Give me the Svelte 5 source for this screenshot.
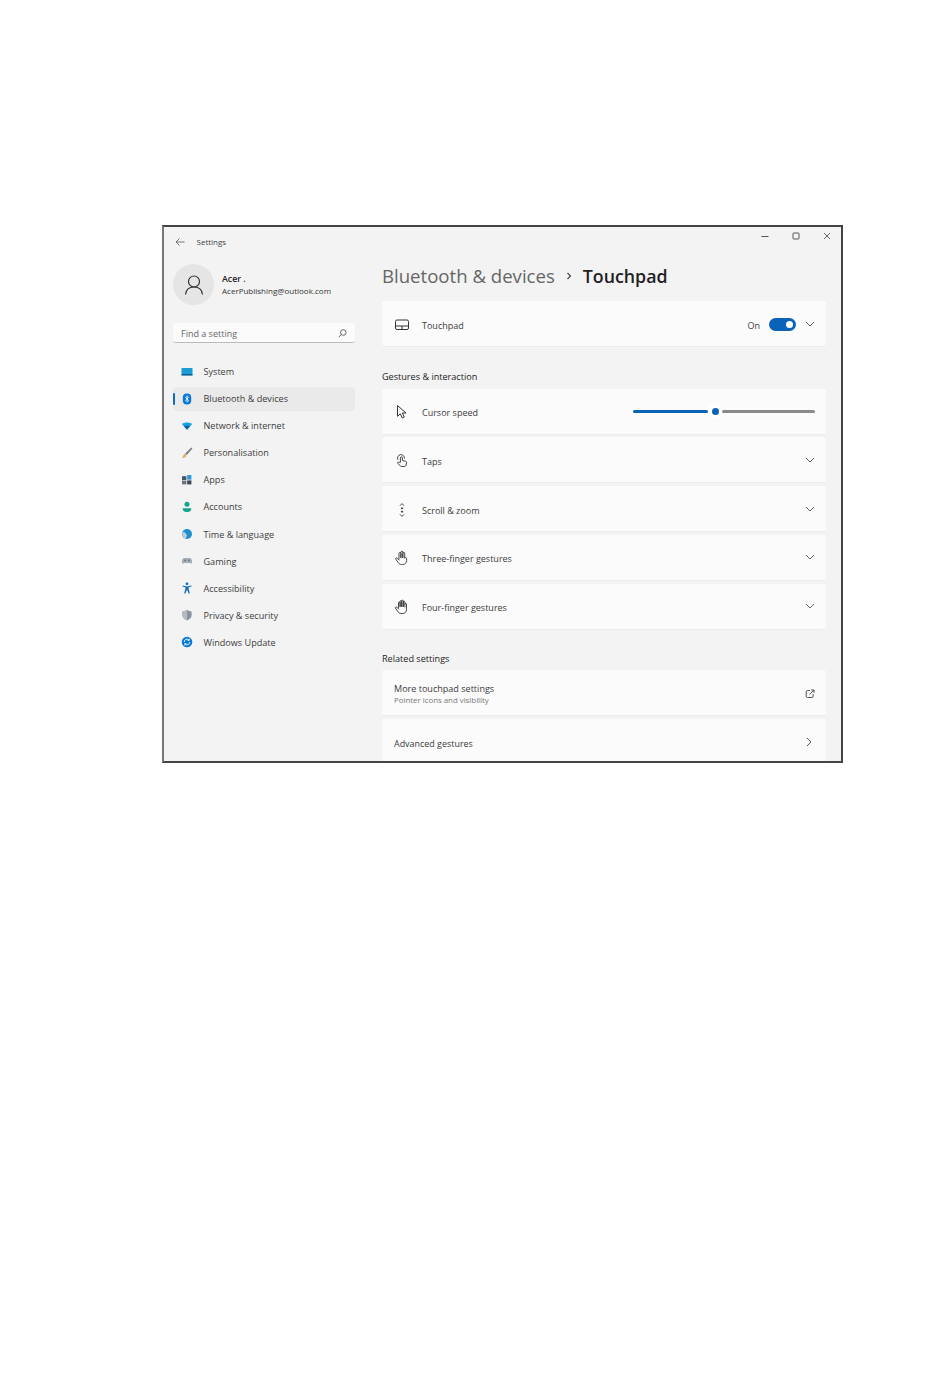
<script>
  const nav = [
    { id: 'system', label: 'System' },
    { id: 'bt', label: 'Bluetooth & devices', active: true },
    { id: 'net', label: 'Network & internet' },
    { id: 'pers', label: 'Personalisation' },
    { id: 'apps', label: 'Apps' },
    { id: 'acc', label: 'Accounts' },
    { id: 'time', label: 'Time & language' },
    { id: 'game', label: 'Gaming' },
    { id: 'a11y', label: 'Accessibility' },
    { id: 'priv', label: 'Privacy & security' },
    { id: 'upd', label: 'Windows Update' }
  ];
  const rows = [
    { id: 'taps', label: 'Taps' },
    { id: 'scroll', label: 'Scroll & zoom' },
    { id: 'three', label: 'Three-finger gestures' },
    { id: 'four', label: 'Four-finger gestures' }
  ];
</script>

{#snippet chevron()}
  <svg class="chev" width="10" height="6" viewBox="0 0 10 6"><path d="M1 1l4 4 4-4" fill="none" stroke="#666" stroke-width="1"/></svg>
{/snippet}

{#snippet navIcon(id)}
  <svg width="12" height="12" viewBox="0 0 12 12">
    {#if id === 'system'}
      <rect x="0.5" y="2" width="11" height="6.5" fill="#1b9bd1"/><rect x="0.5" y="8" width="11" height="1.6" fill="#0f5f99"/>
    {:else if id === 'bt'}
      <rect x="1.8" y="0.6" width="8.4" height="10.8" rx="4" fill="#0a78d4"/><path d="M4.3 4l3.2 3.6L6 9.2V2.8l1.5 1.6L4.3 8" fill="none" stroke="#fff" stroke-width="0.8"/>
    {:else if id === 'net'}
      <path d="M0.8 4C3.5 2 8.5 2 11.2 4L6 9.8z" fill="#1ba2dc"/><path d="M3 6.2C4.8 5.2 7.2 5.2 9 6.2L6 9.8z" fill="#0a5fa8"/>
    {:else if id === 'pers'}
      <path d="M10.4 0.6L11.4 1.6 5.8 8 4.2 6.4z" fill="#77777d"/><path d="M3.8 6.6L5.4 8.2C5.2 10.2 3 11 0.8 10.8 2.2 10 2.4 7.4 3.8 6.6z" fill="#e3a860"/>
    {:else if id === 'apps'}
      <rect x="1" y="2.2" width="4.4" height="3.8" fill="#4a5568"/><rect x="6.2" y="1" width="4.2" height="4.6" fill="#2a9bd8"/><rect x="1" y="6.6" width="4.4" height="3.8" fill="#6a7280"/><rect x="6.2" y="6.4" width="4.2" height="4" fill="#3c4654"/>
    {:else if id === 'acc'}
      <circle cx="6" cy="3.2" r="2.5" fill="#14a38b"/><path d="M1.8 7.2h8.4c0.5 2.2-1.6 3.8-4.2 3.8S1.3 9.4 1.8 7.2z" fill="#14a38b"/>
    {:else if id === 'time'}
      <circle cx="6" cy="6" r="5" fill="#1f90cf"/><path d="M1.5 4C3.2 3.8 5.6 5 5.8 7.4 5.9 9 4.6 10.6 3.8 10.4 2 9.6 0.8 6.8 1.5 4z" fill="#c6ced6"/>
    {:else if id === 'game'}
      <path d="M3 3h6c1.4 0 2.2 2.4 2.2 4.2 0 1.6-1.4 1.8-2.2 0.8H3c-0.8 1-2.2 0.8-2.2-0.8C0.8 5.4 1.6 3 3 3z" fill="#a6afb8"/><circle cx="8" cy="5.4" r="0.9" fill="#66727e"/><circle cx="4" cy="5.4" r="0.9" fill="#66727e"/>
    {:else if id === 'a11y'}
      <circle cx="6" cy="1.8" r="1.4" fill="#0f6cbd"/><path d="M1.4 3.4L6 4.4l4.6-1-0.2 1.2L7.4 5.6 8.8 11.4H7.6L6 7.6 4.4 11.4H3.2L4.6 5.6 1.6 4.6z" fill="#0f6cbd"/>
    {:else if id === 'priv'}
      <path d="M6 0.8C7.4 2 9 2.4 10.6 2.4V6c0 2.8-2 4.4-4.6 5.4C3.4 10.4 1.4 8.8 1.4 6V2.4C3 2.4 4.6 2 6 0.8z" fill="#8b939c"/><path d="M6 0.8V11.4C3.4 10.4 1.4 8.8 1.4 6V2.4C3 2.4 4.6 2 6 0.8z" fill="#b4bbc2"/>
    {:else if id === 'upd'}
      <circle cx="6" cy="6" r="5.3" fill="#0a78d4"/><path d="M3.2 6a2.8 2.8 0 0 1 4.8-2M8.800 6a2.8 2.8 0 0 1-4.8 2" fill="none" stroke="#fff" stroke-width="0.9"/><path d="M8.3 2.6V4.400H6.6M3.7 9.4V7.6H5.4" fill="none" stroke="#fff" stroke-width="0.8"/>
    {/if}
  </svg>
{/snippet}

{#snippet rowIcon(id)}
  <svg width="16" height="16" viewBox="0 0 16 16" fill="none" stroke="#333" stroke-width="0.9" stroke-linejoin="round" stroke-linecap="round">
    {#if id === 'taps'}
      <path d="M3.8 6.500A3.500 3.500 0 1 1 10.500 5.200"/><path d="M6.400 9V4.800a1 1 0 0 1 2 0V7.500l3.200 .7c.8.2 1.100.8 1 1.500l-.5 2.400c-.2.8-.7 1.400-1.600 1.400H7.700c-.6 0-1-.2-1.400-.7L3.700 10.400c-.7-.9.500-1.900 1.300-1.200z"/>
    {:else if id === 'scroll'}
      <path d="M6.200 3.400L8 1.600l1.800 1.800M6.200 12.600L8 14.400l1.800-1.800"/><circle cx="8" cy="6.300" r="0.600" fill="#333"/><circle cx="8" cy="9.700" r="0.600" fill="#333"/>
    {:else if id === 'three'}
      <path d="M5 9V3.400a.95.95 0 0 1 1.900 0V7.500M6.900 7.500V2.200a.95.95 0 0 1 1.900 0V7.500M8.800 7.500V3.200a.95.95 0 0 1 1.900 0V7.800M10.700 7.800c.7-.6 1.900-.2 1.900.9V10.500c0 2.500-1.600 4-4 4H7.400c-1.300 0-2.200-.6-3-1.700L1.800 9.200c-.6-.9.600-1.800 1.400-1L5 10"/>
    {:else if id === 'four'}
      <path d="M4.500 9V3.800a.8.8 0 0 1 1.600 0V7.500M6.100 7.500V2.400a.8.8 0 0 1 1.600 0V7.500M7.700 7.500V2a.8.8 0 0 1 1.600 0V7.500M9.300 7.500V3a.8.8 0 0 1 1.600 0V8M10.900 5.200a.8.8 0 0 1 1.600 0V10.500c0 2.500-1.600 4-4 4H7c-1.300 0-2.200-.6-3-1.700L1.500 9.200c-.6-.9.600-1.800 1.400-1L4.500 10"/>
    {/if}
  </svg>
{/snippet}

<div class="page">
  <div class="window">
    <header class="titlebar">
      <div class="tb-left">
        <svg width="10" height="10" viewBox="0 0 10 10" fill="none" stroke="#555" stroke-width="0.8"><path d="M9.500 5H1M4.500 1.500L1 5l3.500 3.500"/></svg>
        <span>Settings</span>
      </div>
      <div class="tb-controls">
        <svg width="8" height="8" viewBox="0 0 8 8"><path d="M0.500 4.500h7" stroke="#444" stroke-width="0.9"/></svg>
        <svg width="8" height="8" viewBox="0 0 8 8"><rect x="1" y="1" width="6" height="6" rx="0.8" fill="none" stroke="#444" stroke-width="0.9"/></svg>
        <svg width="8" height="8" viewBox="0 0 8 8"><path d="M1 1l6 6M7 1L1 7" stroke="#444" stroke-width="0.8"/></svg>
      </div>
    </header>

    <div class="body">
      <aside class="sidebar">
        <div class="profile">
          <div class="avatar">
            <svg width="22" height="22" viewBox="0 0 22 22" fill="none" stroke="#333" stroke-width="1.2"><circle cx="11" cy="7.500" r="5.500"/><path d="M2.500 20.500c.5-4.800 3.500-7.500 8.500-7.500s8 2.700 8.500 7.500"/></svg>
          </div>
          <div class="who">
            <div class="name">Acer .</div>
            <div class="mail">AcerPublishing@outlook.com</div>
          </div>
        </div>

        <div class="search">
          <span>Find a setting</span>
          <svg width="9" height="9" viewBox="0 0 9 9" fill="none" stroke="#444" stroke-width="0.8"><circle cx="5.300" cy="3.500" r="2.800"/><path d="M3.300 5.500L0.800 8.200"/></svg>
        </div>

        <nav class="nav">
          {#each nav as item}
            <div class="nav-item" class:active={item.active}>
              {@render navIcon(item.id)}
              <span>{item.label}</span>
            </div>
          {/each}
        </nav>
      </aside>

      <main class="content">
        <h1><span class="crumb">Bluetooth &amp; devices</span>
          <svg class="sep" width="8" height="10" viewBox="0 0 8 10" fill="none" stroke="#444" stroke-width="1.1"><path d="M2.500 2L5.500 5 2.500 8"/></svg>
          <span class="here">Touchpad</span></h1>

        <section class="card">
          <svg class="ic" width="16" height="16" viewBox="0 0 16 16" fill="none" stroke="#333" stroke-width="1"><rect x="1.500" y="3" width="13" height="9.500" rx="1.500"/><path d="M1.500 9h13M8 9v3.500"/></svg>
          <span class="label">Touchpad</span>
          <span class="on">On</span>
          <span class="toggle"><i></i></span>
          {@render chevron()}
        </section>

        <h2>Gestures &amp; interaction</h2>

        <div class="stack">
          <section class="card">
            <svg class="ic" width="16" height="16" viewBox="0 0 16 16" fill="none" stroke="#333" stroke-width="1" stroke-linejoin="round"><path d="M3.500 1.500v10.800l2.800-2.500 2 4.200 2-1-2-4H12z"/></svg>
            <span class="label">Cursor speed</span>
            <div class="slider">
              <span class="fill"></span>
              <span class="thumb"><i></i></span>
              <span class="rest"></span>
            </div>
          </section>
          {#each rows as r}
            <section class="card">
              <span class="ic">{@render rowIcon(r.id)}</span>
              <span class="label">{r.label}</span>
              <span class="grow"></span>
              {@render chevron()}
            </section>
          {/each}
        </div>

        <h2 class="related">Related settings</h2>

        <div class="stack">
          <section class="card plain">
            <div class="two">
              <span class="label">More touchpad settings</span>
              <span class="sub">Pointer icons and visibility</span>
            </div>
            <span class="grow"></span>
            <svg class="ext" width="10" height="10" viewBox="0 0 10 10" fill="none" stroke="#444" stroke-width="0.9"><path d="M5 1.500H2.500a1.300 1.300 0 0 0-1.300 1.300v4.400a1.300 1.300 0 0 0 1.300 1.300h4.400a1.300 1.300 0 0 0 1.300-1.300V5M4.500 5.500L8.800 1.200M6 1h3v3"/></svg>
          </section>
          <section class="card plain">
            <span class="label adv">Advanced gestures</span>
            <span class="grow"></span>
            <svg class="arrow" width="6" height="10" viewBox="0 0 6 10" fill="none" stroke="#555" stroke-width="1"><path d="M1 1l4 4-4 4"/></svg>
          </section>
        </div>
      </main>
    </div>
  </div>
</div>

<style>
  :global(body) { margin: 0; background: #fff; }
  .page { width: 950px; height: 1381px; padding: 225px 0 0 162px; box-sizing: border-box; font-family: "Open Sans", "Noto Sans", sans-serif; color: #333; }
  .window { width: 681px; height: 538px; box-sizing: border-box; border: 2px solid #444; border-left-color: #777; background: #f3f3f3; overflow: hidden; display: flex; flex-direction: column; }

  .titlebar { display: flex; justify-content: space-between; height: 25px; flex: none; }
  .tb-left { display: flex; align-items: center; gap: 12px; padding: 6px 0 0 10.500px; height: 17px; font-size: 8px; color: #444; }
  .tb-controls { display: flex; gap: 23px; padding: 5px 10px 0 0; height: 10px; }

  .body { display: flex; flex: 1; min-height: 0; }
  .sidebar { width: 218px; flex: none; padding: 12px 0 0 9px; box-sizing: border-box; }
  .profile { display: flex; align-items: center; gap: 8px; height: 41px; }
  .avatar { width: 41px; height: 41px; border-radius: 50%; background: #e5e5e5; display: flex; align-items: center; justify-content: center; }
  .name { font-size: 8.800px; font-weight: 600; line-height: 11px; color: #222; margin-top: 1px; }
  .mail { font-size: 8px; line-height: 11px; color: #333; }

  .search { display: flex; justify-content: space-between; align-items: center; margin-top: 18px; width: 182px; height: 20px; box-sizing: border-box; padding: 1px 8px 0; background: #fbfbfb; border-radius: 3px; border-bottom: 1px solid #bbb; font-size: 9px; color: #666; }

  .nav { margin-top: 16.500px; display: flex; flex-direction: column; gap: 3.100px; }
  .nav-item { position: relative; display: flex; align-items: center; gap: 10.500px; width: 182px; height: 24px; box-sizing: border-box; padding-left: 8px; border-radius: 4px; font-size: 9.100px; color: #3c3c3c; }
  .nav-item.active { background: #eaeaea; }
  .nav-item.active::before { content: ""; position: absolute; left: 0; top: 6px; width: 2px; height: 12px; border-radius: 1px; background: #0f6cbd; }

  .content { flex: 1; min-width: 0; padding-right: 15px; box-sizing: border-box; }
  h1 { display: flex; align-items: center; margin: 0; height: 49px; box-sizing: border-box; padding-bottom: 2px; font-size: 18.600px; font-weight: 500; color: #1f1f1f; font-family: "Open Sans", sans-serif; }
  .crumb { color: #666; }
  .here { font-weight: 600; font-size: 17.800px; }
  .sep { margin: 0 10px; }

  .card { display: flex; align-items: center; height: 46px; box-sizing: border-box; padding: 2px 11px 0 12px; background: #fbfbfb; border-radius: 3px; border-bottom: 1px solid #ececec; }
  .ic { display: flex; width: 16px; height: 16px; margin-right: 12px; flex: none; }
  .label { font-size: 9px; color: #3c3c3c; line-height: 12px; margin-top: 2px; }
  .chev { margin-top: -2px; }
  .grow { flex: 1; }
  .on { margin-left: auto; font-size: 9px; color: #444; margin-right: 9px; margin-top: 2px; }
  .toggle { position: relative; width: 27px; height: 13px; border-radius: 7px; background: #0a63b8; margin-right: 9px; margin-top: -1px; }
  .toggle i { position: absolute; right: 3px; top: 3px; width: 7px; height: 7px; border-radius: 50%; background: #fff; }

  h2 { margin: 0; font-size: 9.100px; font-weight: 500; color: #222; line-height: 12px; padding: 24px 0 5.500px; }
  h2.related { padding: 23px 0 5.500px; }
  .stack { display: flex; flex-direction: column; gap: 2.800px; }

  .slider { margin-left: auto; margin-top: -2px; display: flex; align-items: center; width: 182px; }
  .fill { width: 75px; height: 3px; border-radius: 2px; background: #0a63b8; }
  .thumb { width: 14px; height: 14px; display: flex; align-items: center; justify-content: center; background: #fff; border-radius: 50%; }
  .thumb i { width: 7px; height: 7px; border-radius: 50%; background: #0a63b8; }
  .rest { flex: 1; height: 3px; border-radius: 2px; background: #8a8a8a; }

  .two { display: flex; flex-direction: column; }
  .two .label { margin-top: 0; font-size: 9.050px; }
  .sub { font-size: 7.850px; line-height: 10px; color: #777; }
  .adv { font-size: 8.950px; margin-top: 4px; }
  .arrow { margin-right: 3px; }
</style>
